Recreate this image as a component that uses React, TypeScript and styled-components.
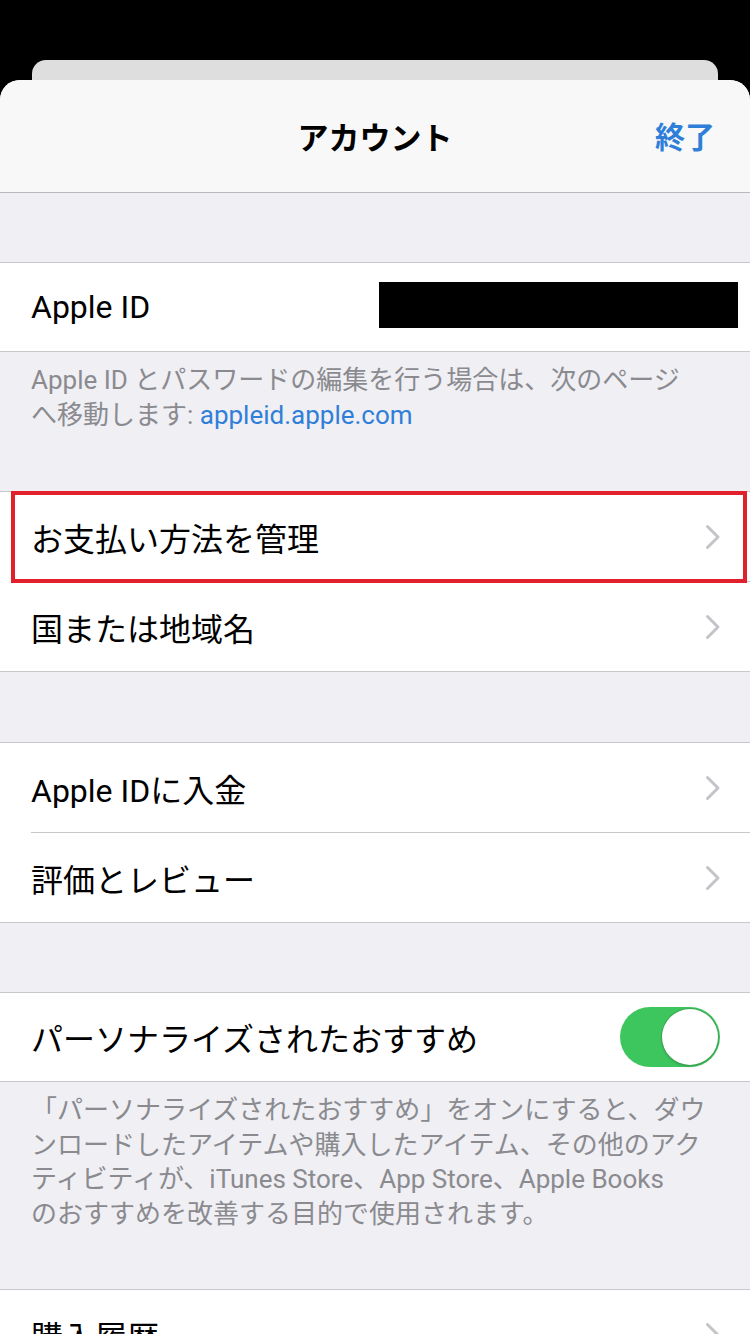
import React from "react";
import styled, { createGlobalStyle } from "styled-components";

const Global = createGlobalStyle`
  html, body { margin: 0; padding: 0; background: #000; }
  body { font-family: "Roboto", "Noto Sans CJK JP", sans-serif; -webkit-font-smoothing: antialiased; }
  * { box-sizing: border-box; }
`;

const Screen = styled.div`
  width: 750px;
  height: 1334px;
  overflow: hidden;
  background: #000;
  padding-top: 60px;
  display: flex;
  flex-direction: column;
`;

const BackCard = styled.div`
  height: 20px;
  margin: 0 32px;
  background: #dedede;
  border-radius: 14px 14px 0 0;
  flex-shrink: 0;
`;

const Sheet = styled.div`
  flex: 1;
  background: #efeff4;
  border-radius: 20px 20px 0 0;
  overflow: hidden;
  display: flex;
  flex-direction: column;
`;

const Header = styled.div`
  height: 113px;
  flex-shrink: 0;
  background: #f8f8f9;
  border-bottom: 1px solid #b9b9bd;
  display: grid;
  grid-template-columns: 1fr auto 1fr;
  align-items: center;
  padding: 0 35px 2px 35px;
`;

const Title = styled.div`
  grid-column: 2;
  font-family: "Noto Sans CJK JP", sans-serif;
  font-size: 31px;
  font-weight: 700;
  color: #000;
`;

const Done = styled.div`
  grid-column: 3;
  justify-self: end;
  font-family: "Noto Sans CJK JP", sans-serif;
  font-size: 30px;
  font-weight: 700;
  color: #2f7fd8;
`;

const Gap = styled.div<{ $h: number }>`
  height: ${(p) => p.$h}px;
  flex-shrink: 0;
`;

const Section = styled.div`
  background: #fff;
  border-top: 1px solid #c8c7cc;
  border-bottom: 1px solid #c8c7cc;
  flex-shrink: 0;
`;

const Row = styled.div<{ $highlight?: boolean; $h?: number }>`
  position: relative;
  height: ${(p) => p.$h ?? 89}px;
  display: flex;
  align-items: center;
  justify-content: space-between;
  padding: 0 32px 0 31px;
  font-size: 32px;
  color: #000;
  &::after {
    content: "";
    display: ${(p) => (p.$highlight ? "block" : "none")};
    position: absolute;
    top: -1px;
    left: 11px;
    right: 3px;
    bottom: -2px;
    border: 4px solid #e1202b;
    pointer-events: none;
  }
`;

const Separator = styled.div`
  height: 1px;
  margin-left: 31px;
  background: #c8c7cc;
`;

const Label = styled.span`
  font-family: "Roboto", "Noto Sans CJK JP", sans-serif;
  font-size: 32px;
  color: #000;
  white-space: nowrap;
`;

const Redacted = styled.div`
  width: 359px;
  height: 46px;
  background: #000;
  margin-right: -20px;
  margin-top: -5px;
`;

const Footer = styled.div<{ $h: number; $pt: number }>`
  height: ${(p) => p.$h}px;
  padding: ${(p) => p.$pt}px 31px 0 31px;
  font-family: "Roboto", "Noto Sans CJK JP", sans-serif;
  font-size: 26px;
  line-height: 34.5px;
  color: #8a8a8f;
  flex-shrink: 0;
  white-space: nowrap;
`;

const Link = styled.span`
  color: #2f7fd8;
`;

const ToggleTrack = styled.div`
  width: 100px;
  height: 60px;
  border-radius: 30px;
  background: #3dc65d;
  display: flex;
  align-items: center;
  justify-content: flex-end;
  padding: 2px;
  margin-right: -2px;
`;

const ToggleKnob = styled.div`
  width: 56px;
  height: 56px;
  border-radius: 50%;
  background: #fff;
  box-shadow: 0 0 0 1px rgba(60, 150, 80, 0.6), 0 2px 3px rgba(0, 0, 0, 0.15);
`;

const Chevron = () => (
  <svg width="16" height="26" viewBox="0 0 16 26" style={{ marginRight: -3 }}>
    <path d="M2.5 2.5 L13 13 L2.5 23.5" fill="none" stroke="#c4c4c8" strokeWidth="3" strokeLinecap="round" strokeLinejoin="round" />
  </svg>
);

const NavRow: React.FC<{ label: string; highlight?: boolean }> = ({ label, highlight }) => (
  <Row $highlight={highlight}>
    <Label>{label}</Label>
    <Chevron />
  </Row>
);

export default function App() {
  return (
    <>
      <Global />
      <Screen>
        <BackCard />
        <Sheet>
          <Header>
            <Title>アカウント</Title>
            <Done>終了</Done>
          </Header>
          <Gap $h={69} />
          <Section>
            <Row $h={88}>
              <Label>Apple ID</Label>
              <Redacted />
            </Row>
          </Section>
          <Footer $h={139} $pt={11}>
            Apple ID とパスワードの編集を行う場合は、次のページ
            <br />
            へ移動します: <Link>appleid.apple.com</Link>
          </Footer>
          <Section>
            <NavRow label="お支払い方法を管理" highlight />
            <Separator />
            <NavRow label="国または地域名" />
          </Section>
          <Gap $h={70} />
          <Section>
            <NavRow label="Apple IDに入金" />
            <Separator />
            <NavRow label="評価とレビュー" />
          </Section>
          <Gap $h={69} />
          <Section>
            <Row $h={88}>
              <Label>パーソナライズされたおすすめ</Label>
              <ToggleTrack>
                <ToggleKnob />
              </ToggleTrack>
            </Row>
          </Section>
          <Footer $h={207} $pt={11}>
            「パーソナライズされたおすすめ」をオンにすると、ダウ
            <br />
            ンロードしたアイテムや購入したアイテム、その他のアク
            <br />
            ティビティが、iTunes Store、App Store、Apple Books
            <br />
            のおすすめを改善する目的で使用されます。
          </Footer>
          <Section>
            <NavRow label="購入履歴" />
          </Section>
        </Sheet>
      </Screen>
    </>
  );
}
